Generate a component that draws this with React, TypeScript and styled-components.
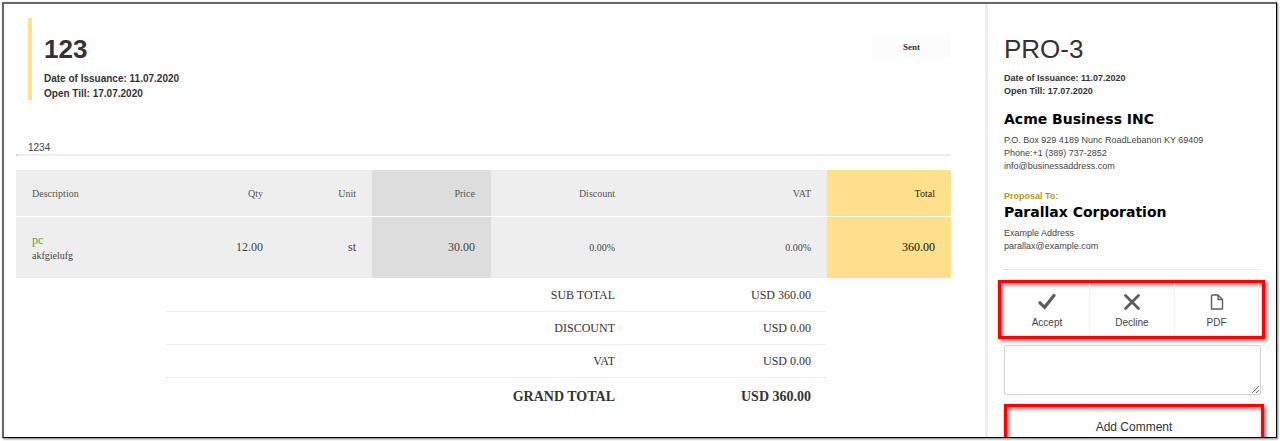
import React from "react";
import styled, { createGlobalStyle } from "styled-components";

const sans = '"Liberation Sans", Arial, sans-serif';
const serif = '"Liberation Serif", "Times New Roman", serif';

const GlobalStyle = createGlobalStyle`
  *, *::before, *::after { box-sizing: border-box; }
  html, body { margin: 0; background: #fff; }
  body { font-family: ${sans}; color: #333; }
  h1, h2, h3, p { margin: 0; }
  button { font: inherit; color: inherit; }
`;

const Page = styled.div`
  padding: 2px 3px 3px 2px;
`;

const Frame = styled.div`
  display: flex;
  height: calc(100vh - 5px);
  min-height: 300px;
  overflow: hidden;
  border: solid #666;
  border-width: 2px 1px 1px 2px;
  border-right-color: #000;
  border-bottom-color: #000;
  box-shadow: 1px 1px 2px #777;
`;

const Main = styled.main`
  flex: 1;
  min-width: 0;
  padding: 14px 34px 0 12px;
`;

const Header = styled.header`
  display: flex;
  justify-content: space-between;
  align-items: flex-start;
  padding-left: 12px;
`;

const TitleBlock = styled.div`
  height: 82px;
  padding: 15px 0 0 12px;
  border-left: 4px solid #ffe08c;
`;

const Title = styled.h1<{ $light?: boolean }>`
  font-size: 26px;
  line-height: 32px;
  font-weight: ${(p) => (p.$light ? 400 : 700)};
`;

const Dates = styled.div<{ $small?: boolean }>`
  margin-top: ${(p) => (p.$small ? 7 : 6)}px;
  font-size: ${(p) => (p.$small ? 9 : 10)}px;
  line-height: ${(p) => (p.$small ? 13 : 15)}px;
  font-weight: 700;
`;

const Status = styled.span`
  width: 79px;
  margin-top: 17px;
  background: #fcfcfc;
  font: 700 9px/24px ${serif};
  text-align: center;
`;

const Note = styled.p`
  margin-top: 41px;
  padding-left: 12px;
  font-size: 10px;
  line-height: 13px;
  color: #444;
`;

const Rule = styled.hr`
  height: 2px;
  margin: 0;
  border: 0;
  border-left: 2px solid #d4d4d4;
  background: #eee;
`;

const Items = styled.table`
  width: 100%;
  margin-top: 14px;
  table-layout: fixed;
  border-collapse: collapse;
  font-family: ${serif};
  font-size: 12px;
  color: #444;
`;

const fills = { plain: "#eee", price: "#ddd", total: "#ffe08c" };
type Fill = keyof typeof fills;

const HeadCell = styled.th<{ $fill?: Fill }>`
  height: 46px;
  padding: 2px 16px 0;
  border-bottom: 1px solid #fff;
  background: ${(p) => fills[p.$fill ?? "plain"]};
  color: ${(p) => (p.$fill === "total" ? "#222" : "#555")};
  font-size: 10px;
  font-weight: 400;
  text-align: right;
  &:first-child { text-align: left; }
`;

const Cell = styled.td<{ $fill?: Fill; $small?: boolean }>`
  height: 62px;
  padding: 1px 16px 0;
  background: ${(p) => fills[p.$fill ?? "plain"]};
  color: ${(p) => (p.$fill === "total" ? "#111" : "#444")};
  font-size: ${(p) => (p.$small ? 10 : 12)}px;
  text-align: right;
  &:first-child { text-align: left; }
`;

const ItemName = styled.div`
  font-size: 12px;
  line-height: 16px;
  color: #52a81f;
`;

const ItemText = styled.div`
  font-size: 10px;
  line-height: 16px;
`;

const SumCell = styled.td<{ $grand?: boolean }>`
  height: ${(p) => (p.$grand ? 37 : 33)}px;
  padding: 2px 16px 0;
  border-bottom: ${(p) => (p.$grand ? "0" : "1px solid #eee")};
  color: #333;
  font-size: ${(p) => (p.$grand ? 14 : 12)}px;
  font-weight: ${(p) => (p.$grand ? 700 : 400)};
  text-align: right;
`;

const Side = styled.aside`
  width: 291px;
  flex: none;
  padding: 29px 15px 0 16px;
  border-left: 3px solid #eee;
`;

const Company = styled.h2<{ $gap?: boolean }>`
  margin-top: ${(p) => (p.$gap ? 12 : 0)}px;
  font: 700 14px/18px "DejaVu Sans", "Arial Black", sans-serif;
  color: #000;
`;

const Lines = styled.p`
  margin-top: 6px;
  font-size: 9px;
  line-height: 13px;
  color: #444;
`;

const Label = styled.h3`
  margin-top: 17px;
  font-size: 9px;
  line-height: 13px;
  color: #b8922b;
`;

const SideRule = styled(Rule)`
  height: 1px;
  margin-top: 16px;
`;

const Actions = styled.div`
  display: grid;
  grid-template-columns: repeat(3, 1fr);
  margin: 10px -4px 0 -6px;
  padding: 0 3px;
  border: 3px solid #f00;
  box-shadow: 2px 2px 4px #0008, inset 2px 2px 4px #0008;
`;

const Action = styled.button`
  display: flex;
  flex-direction: column;
  align-items: center;
  gap: 5px;
  height: 53px;
  padding: 10px 0 0;
  border: 0;
  border-left: 1px solid #eee;
  background: none;
  font-size: 10px;
  line-height: 14px;
  color: #444;
  &:last-child { border-right: 1px solid #eee; }
`;

const Comment = styled.textarea`
  display: block;
  width: 100%;
  height: 50px;
  margin-top: 6px;
  border: 1px solid #d4d4d4;
  border-radius: 2px;
  background: #fff;
`;

const AddComment = styled.button`
  display: block;
  width: calc(100% + 3px);
  height: 46px;
  margin-top: 9px;
  border: 3px solid #f00;
  background: none;
  box-shadow: 2px 2px 4px #0008, inset 2px 2px 4px #0008;
  font-size: 12px;
`;

const columns = [149, 114, 93, 119, 140, 196, 124];
const headings: [string, Fill?][] = [
  ["Description"], ["Qty"], ["Unit"], ["Price", "price"], ["Discount"], ["VAT"], ["Total", "total"],
];
const sums = [
  ["SUB TOTAL", "USD 360.00"],
  ["DISCOUNT", "USD 0.00"],
  ["VAT", "USD 0.00"],
  ["GRAND TOTAL", "USD 360.00"],
];

const CheckIcon = () => (
  <svg width="18" height="18" viewBox="0 0 18 18" aria-hidden="true">
    <path d="M2 9.800 6.600 14.300 16 2.500" fill="none" stroke="#5c5c5c" strokeWidth="3.200" strokeLinecap="round" />
  </svg>
);
const CrossIcon = () => (
  <svg width="18" height="18" viewBox="0 0 18 18" aria-hidden="true">
    <path d="M2.500 2.500 15.500 15.500M15.500 2.500 2.500 15.500" fill="none" stroke="#5c5c5c" strokeWidth="2.800" strokeLinecap="round" />
  </svg>
);
const FileIcon = () => (
  <svg width="18" height="18" viewBox="0 0 18 18" aria-hidden="true">
    <path d="M4.500 2h5.500l4.500 4.500v9.500h-11v-13q0-1 1-1zM10 2v4.500h4.500" fill="none" stroke="#5c5c5c" strokeWidth="1.400" strokeLinejoin="round" />
  </svg>
);

const IssueDates = ({ small }: { small?: boolean }) => (
  <Dates $small={small}>
    Date of Issuance: 11.07.2020
    <br />
    Open Till: 17.07.2020
  </Dates>
);

export default function App() {
  return (
    <Page>
      <GlobalStyle />
      <Frame>
        <Main>
          <Header>
            <TitleBlock>
              <Title>123</Title>
              <IssueDates />
            </TitleBlock>
            <Status>Sent</Status>
          </Header>
          <Note>1234</Note>
          <Rule />
          <Items>
            <colgroup>
              {columns.map((width, i) => <col key={i} width={width} />)}
            </colgroup>
            <thead>
              <tr>
                {headings.map(([text, fill]) => (
                  <HeadCell key={text} scope="col" $fill={fill}>{text}</HeadCell>
                ))}
              </tr>
            </thead>
            <tbody>
              <tr>
                <Cell>
                  <ItemName>pc</ItemName>
                  <ItemText>akfgielufg</ItemText>
                </Cell>
                <Cell>12.00</Cell>
                <Cell>st</Cell>
                <Cell $fill="price">30.00</Cell>
                <Cell $small>0.00%</Cell>
                <Cell $small>0.00%</Cell>
                <Cell $fill="total">360.00</Cell>
              </tr>
            </tbody>
            <tfoot>
              {sums.map(([name, amount], i) => (
                <tr key={name}>
                  <td />
                  <SumCell colSpan={4} $grand={i === 3}>{name}</SumCell>
                  <SumCell $grand={i === 3}>{amount}</SumCell>
                </tr>
              ))}
            </tfoot>
          </Items>
        </Main>
        <Side>
          <Title as="h2" $light>PRO-3</Title>
          <IssueDates small />
          <Company $gap>Acme Business INC</Company>
          <Lines>
            P.O. Box 929 4189 Nunc RoadLebanon KY 69409
            <br />
            Phone:+1 (389) 737-2852
            <br />
            info@businessaddress.com
          </Lines>
          <Label>Proposal To:</Label>
          <Company>Parallax Corporation</Company>
          <Lines>
            Example Address
            <br />
            parallax@example.com
          </Lines>
          <SideRule />
          <Actions>
            <Action type="button"><CheckIcon />Accept</Action>
            <Action type="button"><CrossIcon />Decline</Action>
            <Action type="button"><FileIcon />PDF</Action>
          </Actions>
          <Comment aria-label="Comment" />
          <AddComment type="button">Add Comment</AddComment>
        </Side>
      </Frame>
    </Page>
  );
}
